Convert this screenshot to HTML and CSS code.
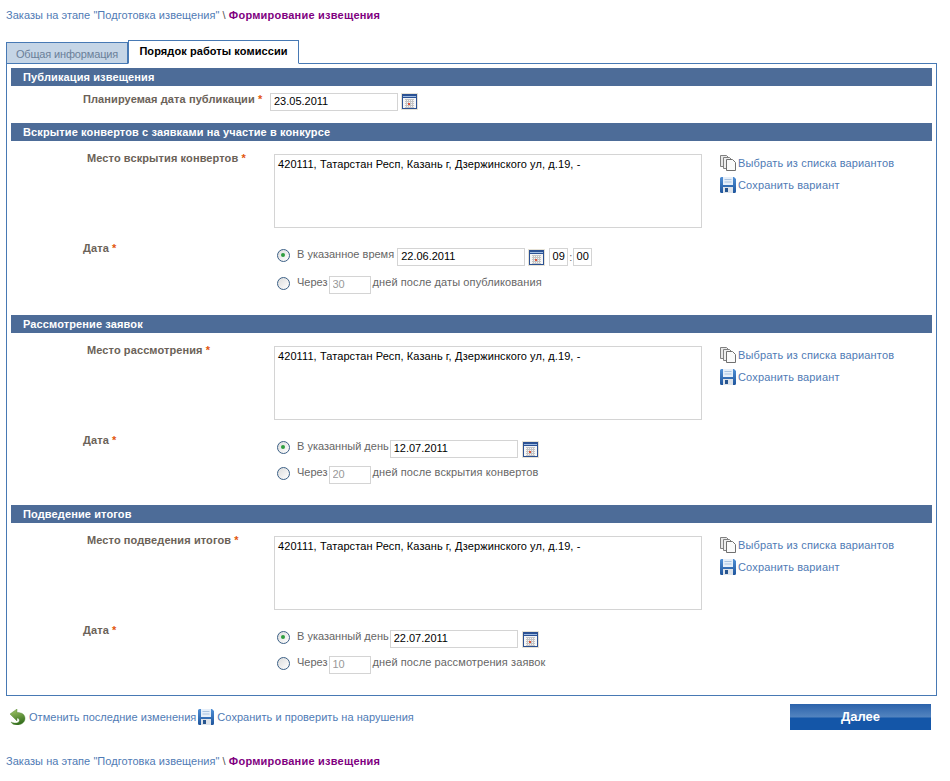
FILE: index.html
```html
<!DOCTYPE html>
<html lang="ru">
<head>
<meta charset="utf-8">
<title>Формирование извещения</title>
<link rel="stylesheet" href="styles.css">
</head>
<body>
<svg class="defs" width="0" height="0" aria-hidden="true">
  <defs>
    <linearGradient id="undoFill" x1="0" y1="0" x2="0.3" y2="1">
      <stop offset="0" stop-color="#a9cc6c"/>
      <stop offset="1" stop-color="#37701f"/>
    </linearGradient>
    <linearGradient id="diskFill" x1="0" y1="0" x2="0" y2="1">
      <stop offset="0" stop-color="#4f8fd6"/>
      <stop offset="1" stop-color="#1f559c"/>
    </linearGradient>
    <symbol id="cal" viewBox="0 0 17 17">
      <rect x="0" y="0" width="17" height="17" fill="#e6e2d6"/>
      <rect x="1" y="1" width="15" height="15" fill="#2b5193"/>
      <rect x="2" y="3" width="13" height="1" fill="#9dbbe2"/>
      <rect x="2" y="5" width="13" height="10" fill="#f5f5f5"/>
      <path d="M4 6.500h9M4 8.500h9M4 10.500h9M4 12.500h9M4 14.500h9M5.500 6v9M7.500 6v9M9.500 6v9M11.500 6v9" stroke="#c4c4c4" stroke-width="1" fill="none"/>
      <rect x="7" y="10" width="2" height="2" fill="#e0523a"/>
    </symbol>
    <symbol id="disk" viewBox="0 0 16 16">
      <path d="M1.500 0H14l2 2v12.500a1.500 1.500 0 0 1-1.500 1.500h-13A1.500 1.500 0 0 1 0 14.500v-13A1.500 1.500 0 0 1 1.500 0z" fill="url(#diskFill)"/>
      <rect x="3" y="0" width="10" height="8" fill="#e6eff9"/>
      <path d="M4.500 2.500h7M4.500 5h7" stroke="#a9c3e0" stroke-width="1"/>
      <rect x="3" y="10" width="10" height="6" fill="#dfe4ea"/>
      <rect x="5" y="11" width="3" height="4" fill="#27558f"/>
    </symbol>
    <symbol id="pages" viewBox="0 0 16 16">
      <path d="M.5.500h6l2 2v9h-8z" fill="#e8e8e8" stroke="#808080"/>
      <path d="M3.500 2.500h6l2 2v9h-8z" fill="#eee" stroke="#808080"/>
      <path d="M6.500 4.500h6l3 3v8h-9z" fill="#fafafa" stroke="#707070"/>
    </symbol>
    <symbol id="undo" viewBox="0 0 16 16">
      <path d="M0 5 7 0v3.500c5 0 8 2 8 6s-4 6.500-8 6.500c-3 0-5-1-6-3 2 1 5 1.500 7 .5s2-4-1-4.500v3z" fill="url(#undoFill)" stroke="#47802a" stroke-width=".4"/>
    </symbol>
  </defs>
</svg>

<nav class="crumbs crumbs-top"><a href="#">Заказы на этапе "Подготовка извещения"</a> \ <span class="here">Формирование извещения</span></nav>

<div class="tabs">
  <div class="tab">Общая информация</div>
  <div class="tab tab-active">Порядок работы комиссии</div>
</div>

<main class="panel">
  <section class="sec sec-pub">
    <h2 class="sec-head">Публикация извещения</h2>
    <div class="pub-row">
      <label class="lbl lbl-pub">Планируемая дата публикации <b class="req">*</b></label>
      <input class="inp inp-date" value="23.05.2011">
      <svg class="ic-cal"><use href="#cal"/></svg>
    </div>
  </section>

  <section class="sec sec-open">
    <h2 class="sec-head">Вскрытие конвертов с заявками на участие в конкурсе</h2>
    <div class="place">
      <label class="lbl lbl-place">Место вскрытия конвертов <b class="req">*</b></label>
      <textarea class="area">420111, Татарстан Респ, Казань г, Дзержинского ул, д.19, -</textarea>
      <div class="links">
        <a href="#" class="lnk"><svg class="ic"><use href="#pages"/></svg>Выбрать из списка вариантов</a>
        <a href="#" class="lnk"><svg class="ic"><use href="#disk"/></svg>Сохранить вариант</a>
      </div>
    </div>
    <div class="dates">
      <label class="lbl lbl-date">Дата <b class="req">*</b></label>
      <div class="opts">
        <div class="opt"><span class="radio radio-on"></span><span class="t">В указанное время</span><input class="inp inp-date2" value="22.06.2011"><svg class="ic-cal"><use href="#cal"/></svg><input class="inp inp-t" value="09"><span class="colon">:</span><input class="inp inp-t" value="00"></div>
        <div class="opt"><span class="radio"></span><span class="t">Через</span><input class="inp inp-n" value="30" disabled><span class="t t-after">дней после даты опубликования</span></div>
      </div>
    </div>
  </section>

  <section class="sec sec-rev">
    <h2 class="sec-head">Рассмотрение заявок</h2>
    <div class="place">
      <label class="lbl lbl-place">Место рассмотрения <b class="req">*</b></label>
      <textarea class="area">420111, Татарстан Респ, Казань г, Дзержинского ул, д.19, -</textarea>
      <div class="links">
        <a href="#" class="lnk"><svg class="ic"><use href="#pages"/></svg>Выбрать из списка вариантов</a>
        <a href="#" class="lnk"><svg class="ic"><use href="#disk"/></svg>Сохранить вариант</a>
      </div>
    </div>
    <div class="dates">
      <label class="lbl lbl-date">Дата <b class="req">*</b></label>
      <div class="opts">
        <div class="opt"><span class="radio radio-on"></span><span class="t">В указанный день</span><input class="inp inp-date3" value="12.07.2011"><svg class="ic-cal"><use href="#cal"/></svg></div>
        <div class="opt"><span class="radio"></span><span class="t">Через</span><input class="inp inp-n" value="20" disabled><span class="t t-after">дней после вскрытия конвертов</span></div>
      </div>
    </div>
  </section>

  <section class="sec sec-sum">
    <h2 class="sec-head">Подведение итогов</h2>
    <div class="place">
      <label class="lbl lbl-place">Место подведения итогов <b class="req">*</b></label>
      <textarea class="area">420111, Татарстан Респ, Казань г, Дзержинского ул, д.19, -</textarea>
      <div class="links">
        <a href="#" class="lnk"><svg class="ic"><use href="#pages"/></svg>Выбрать из списка вариантов</a>
        <a href="#" class="lnk"><svg class="ic"><use href="#disk"/></svg>Сохранить вариант</a>
      </div>
    </div>
    <div class="dates">
      <label class="lbl lbl-date">Дата <b class="req">*</b></label>
      <div class="opts">
        <div class="opt"><span class="radio radio-on"></span><span class="t">В указанный день</span><input class="inp inp-date3" value="22.07.2011"><svg class="ic-cal"><use href="#cal"/></svg></div>
        <div class="opt"><span class="radio"></span><span class="t">Через</span><input class="inp inp-n" value="10" disabled><span class="t t-after">дней после рассмотрения заявок</span></div>
      </div>
    </div>
  </section>
</main>

<div class="actions">
  <a href="#" class="lnk act"><svg class="ic ic-undo"><use href="#undo"/></svg>Отменить последние изменения</a>
  <a href="#" class="lnk act"><svg class="ic ic-save"><use href="#disk"/></svg>Сохранить и проверить на нарушения</a>
  <button class="next" type="button">Далее</button>
</div>

<nav class="crumbs crumbs-bottom"><a href="#">Заказы на этапе "Подготовка извещения"</a> \ <span class="here">Формирование извещения</span></nav>
</body>
</html>
```

FILE: styles.css
```css
* { box-sizing: border-box; }
html, body { margin: 0; padding: 0; }
body {
  width: 950px;
  height: 781px;
  overflow: hidden;
  background: #fff;
  font-family: "Liberation Sans", Arial, sans-serif;
  font-size: 11px;
  line-height: 14px;
  color: #666;
}
.defs { position: absolute; }
a { color: #4f7bb5; text-decoration: none; }

.crumbs { padding-left: 6px; color: #555; height: 14px; letter-spacing: .05px; }
.crumbs-top { margin-top: 8px; }
.crumbs-bottom { margin-top: 23px; }
.here { color: #800080; font-weight: bold; letter-spacing: .22px; }

.tabs { display: flex; margin: 17px 0 0 6px; height: 24px; align-items: flex-end; position: relative; z-index: 1; }
.tab {
  width: 122px;
  height: 21px;
  background: #c5d5e6;
  border: 1px solid #4779b4;
  border-bottom: 0;
  color: #6a7f99;
  text-align: center;
  padding-top: 4px;
  letter-spacing: -.15px;
}
.tab-active {
  width: 171px;
  height: 24px;
  background: #fff;
  color: #000;
  font-weight: bold;
  letter-spacing: .08px;
  padding-top: 3px;
  border-bottom: 1px solid #fff;
  margin-bottom: -1px;
}

.panel {
  width: 931px;
  height: 633px;
  margin: 0 0 0 6px;
  border: 1px solid #4779b4;
  padding: 4px 4px 0;
}
.sec-head {
  margin: 0;
  height: 18px;
  background: #4d6c98;
  color: #fff;
  font-size: 11px;
  font-weight: bold;
  line-height: 18px;
  padding-left: 12px;
  letter-spacing: .12px;
}
.sec-pub { height: 55px; }
.sec-open { height: 192px; }
.sec-rev { height: 190px; }

.lbl { color: #6b6258; font-weight: bold; white-space: nowrap; letter-spacing: .1px; }
.req { color: #e2560e; }

.pub-row { display: flex; align-items: flex-start; padding: 7px 0 0 72px; }
.lbl-pub { width: 187px; margin-top: -1px; }
.inp {
  height: 18px;
  border: 1px solid #d4d4d4;
  background: #fff;
  font: 11px "Liberation Sans", Arial, sans-serif;
  color: #000;
  padding: 0 3px 2px;
  border-radius: 0;
  outline: 0;
}
.inp-date { width: 128px; margin-right: 3px; }
.ic-cal { width: 17px; height: 17px; flex: none; }

.place { display: flex; align-items: flex-start; padding-top: 13px; }
.lbl-place { width: 263px; padding: 0 0 0 76px; margin-top: -3px; }
.area {
  width: 428px;
  height: 74px;
  border: 1px solid #d4d4d4;
  font: 11px/14px "Liberation Sans", Arial, sans-serif;
  letter-spacing: .09px;
  color: #000;
  padding: 2px 3px;
  resize: none;
  display: block;
  outline: 0;
}
.links { display: flex; flex-direction: column; gap: 6px; margin: 1px 0 0 18px; }
.lnk { display: flex; align-items: center; white-space: nowrap; height: 16px; letter-spacing: .15px; }
.ic { width: 16px; height: 16px; margin-right: 2px; flex: none; }

.dates { display: flex; align-items: flex-start; padding-top: 20px; }
.lbl-date { width: 266px; padding-left: 72px; margin-top: -7px; }
.opts { display: flex; flex-direction: column; gap: 8px; }
.sec-open .opts { gap: 10px; }
.opt { display: flex; align-items: center; height: 18px; }
.t { margin-top: -6px; }
.t-after { letter-spacing: .1px; }
.radio {
  width: 13px;
  height: 13px;
  border-radius: 50%;
  border: 1.5px solid #3c6086;
  background: linear-gradient(135deg, #dcdcdc, #fff);
  margin: -4px 7px 0 0;
  flex: none;
  position: relative;
}
.radio-on::after {
  content: "";
  position: absolute;
  left: 3px;
  top: 3px;
  width: 4px;
  height: 4px;
  border-radius: 50%;
  background: #2f9e3f;
}
.opt .inp { margin-left: 3px; }
.opt .inp-date3 { margin-left: 1px; margin-right: 4px; width: 128px; }
.inp-date2 { width: 128px; margin-right: 3px; }
.opt .inp-t { width: 19px; text-align: center; padding: 0 0 2px; margin-left: 4px; }
.colon { width: 5px; text-align: center; }
.opt .colon + .inp-t { margin-left: 0; }
.opt .inp-n { width: 42px; margin-left: 1px; margin-right: 2px; color: #999; background: #fff; }

.actions { display: flex; align-items: flex-start; height: 35px; padding: 13px 0 0 10px; }
.lnk.act { letter-spacing: .04px; }
.ic-undo { margin-right: 3px; }
.ic-save { margin-right: 3px; margin-left: 2px; }
.next {
  margin: -5px 19px 0 auto;
  width: 141px;
  height: 26px;
  border: 0;
  padding: 0 0 2px;
  color: #fff;
  font: bold 13px "Liberation Sans", Arial, sans-serif;
  background: linear-gradient(to bottom, #2b62ab 0, #5384bf 13px, #1456a8 14px, #1456a8 100%);
}
```
